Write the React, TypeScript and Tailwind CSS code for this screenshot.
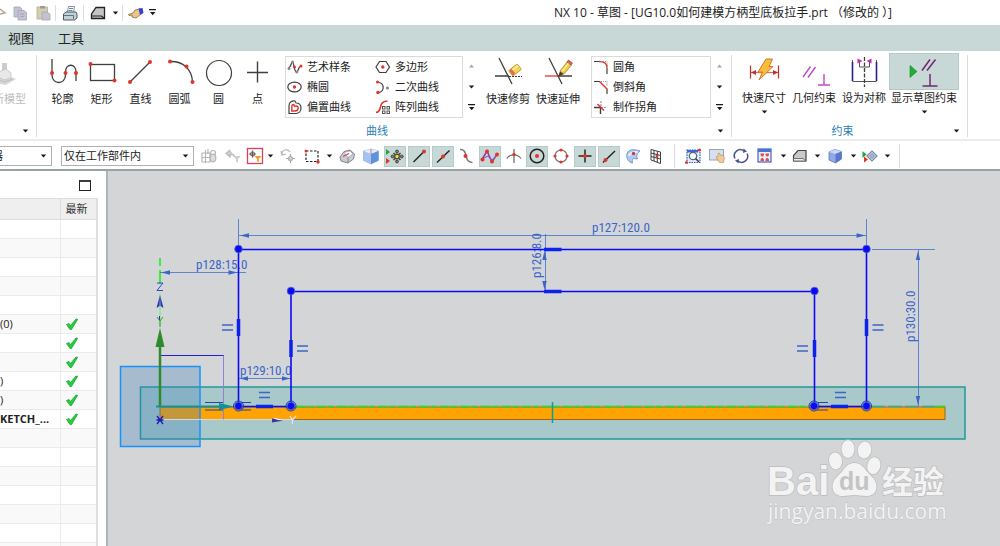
import type { ReactNode } from "react";

const RED = "#e0352b";
const INK = "#3f3f3f";

function Svg({ w, h, box, children }: { w: number; h: number; box?: string; children: ReactNode }) {
  return (
    <svg width={w} height={h} viewBox={box ?? `0 0 ${w} ${h}`} fill="none" stroke={INK} strokeWidth="1.2" className="shrink-0" aria-hidden="true">
      {children}
    </svg>
  );
}

function Dot({ x, y, r = 2 }: { x: number; y: number; r?: number }) {
  return <circle cx={x} cy={y} r={r} fill={RED} stroke="none" />;
}

function Caret({ faint, up, bar }: { faint?: boolean; up?: boolean; bar?: boolean }) {
  return (
    <Svg w={7} h={bar ? 7 : 4}>
      <g fill={faint ? "#a5a5a5" : "#1a1a1a"} stroke="none">
        {bar ? <path d="M0 0h7v1.3H0zM1 3h5.4L3.7 6.2z" /> : up ? <path d="M3.5 0.5 6 3.5H1z" /> : <path d="M.8.4h5.4L3.5 3.6z" />}
      </g>
    </Svg>
  );
}

/* ---------- large ribbon icons (32 x 32) ---------- */

const profileIcon = (
  <Svg w={32} h={32}>
    <path d="M5 2v16c0 10 13.500 10 13.500 0v-3c0-9 10.500-9 10.500 0v9" strokeWidth="1.3" />
    <Dot x={5} y={16} /><Dot x={18.500} y={16} /><Dot x={29} y={16} />
  </Svg>
);
const rectIcon = (
  <Svg w={32} h={32}>
    <rect x="4.500" y="7.500" width="24" height="16" strokeWidth="1.3" />
    <Dot x={4.500} y={7} /><Dot x={28.500} y={23.500} />
  </Svg>
);
const lineIcon = (
  <Svg w={32} h={32}>
    <path d="M5 25 25 5" strokeWidth="1.3" /><Dot x={5} y={25} /><Dot x={25} y={5} />
  </Svg>
);
const arcIcon = (
  <Svg w={32} h={32}>
    <path d="M6 4.500C19 4 28 12 28.500 25" strokeWidth="1.3" /><Dot x={6} y={4.500} /><Dot x={22.500} y={9.500} /><Dot x={28.500} y={25} />
  </Svg>
);
const circleIcon = <Svg w={32} h={32}><circle cx="16" cy="16" r="12.500" /></Svg>;
const pointIcon = <Svg w={32} h={32}><path d="M15.500 4.500v21M5 15.500h21" strokeWidth="1.4" /></Svg>;
const trimIcon = (
  <Svg w={32} h={32}>
    <path d="M7 1l13 26M3 19h14" strokeWidth="1.3" /><path d="M17 19.500h13" strokeDasharray="2 1" />
    <g transform="rotate(-38 23 13)">
      <rect x="17.500" y="9.500" width="11" height="7" rx="1" fill="#f5d456" stroke="#b8922a" strokeWidth=".8" />
      <path d="M18 10h3v6h-3z" fill="#e8694a" stroke="none" /><path d="M21 11.500h7" stroke="#fff3b5" />
    </g>
  </Svg>
);
const extendIcon = (
  <Svg w={32} h={32}>
    <path d="M7 1l13 26M16 19h14" strokeWidth="1.3" /><path d="M3 19h13" stroke={RED} strokeWidth="1.3" />
    <path d="M16 20l2-6 4 3z" fill="#4a4030" stroke="none" />
    <path d="M18 14 25 5l4.500 3L22 17z" fill="#f3cc45" stroke="#a98325" strokeWidth=".8" />
    <path d="M25 5l1.500-2 4 3-1.500 2z" fill="#d96a5a" stroke="#a34436" strokeWidth=".7" />
    <path d="M20 14.500l6.500-8" stroke="#fff0a3" />
  </Svg>
);
const dimensionIcon = (
  <Svg w={32} h={32}>
    <path d="M2.500 9.500v13M30.500 9.500v13" stroke="#c4302b" /><path d="M3 16.500h27" stroke="#e46a62" />
    <path d="M3 16.500l5-2.500v5zM30 16.500l-5-2.500v5z" fill="#c4302b" stroke="none" />
    <path d="M18 3h6.500l-3.500 7.500h4L11 24l3.500-8H10z" fill="#f9bd3c" stroke="#d9752a" strokeWidth="1" />
  </Svg>
);
const constraintIcon = (
  <Svg w={32} h={32}>
    <path d="M5 21l7.500-10.500M10 21.500l7.500-10.500M20 29h13M26 18v11" stroke="#c04bc4" strokeWidth="1.4" />
  </Svg>
);
const symmetricIcon = (
  <Svg w={32} h={32}>
    <path d="M4.500 6v19M28.500 6v19" stroke="#27208c" strokeWidth="1.6" />
    <path d="M4.500 25.500h24M4.500 4v2M28.500 4v2M11.500 5v6h10V5" strokeWidth=".9" />
    <path d="M16.500 1v30" strokeDasharray="4 1.500" strokeWidth="1.300" />
    <path d="M9.500 2.500l5 2.500-5 2.500zM23.500 2.500l-5 2.500 5 2.500z" fill="#c42bb4" stroke="none" />
  </Svg>
);
const showConstraintIcon = (
  <Svg w={36} h={32}>
    <path d="M4 9.500l7 6-7 6z" fill="#1fae35" stroke="#0f8a26" strokeWidth=".6" />
    <path d="M16 14.500 24 3.500M21 14.500l8.500-11M16.500 30h15M24 18v12" stroke="#6e2a70" strokeWidth="1.5" />
  </Svg>
);
const modelIcon = (
  <Svg w={28} h={32}>
    <g stroke="none">
      <path d="M2 5h6v9H2zM12 6h5v14h-5z" fill="#cdcdcd" />
      <path d="M0 19l12-3 14 6-10 6L0 25z" fill="#d9d9d9" />
      <path d="M8 15l8-3 5 4v5l-7 2-6-3z" fill="#e8e8e8" stroke="#bdbdbd" strokeWidth=".7" />
      <path d="M2 20l12 5 9-3" stroke="#bfbfbf" fill="none" />
    </g>
  </Svg>
);

/* ---------- gallery icons (16 x 16) ---------- */

const splineIcon = (
  <Svg w={16} h={16}>
    <path d="M1 9C4 9 4 3 5.500 3S7 13 9.500 13s1-6 5-6" />
    <g fill="#8b8b8b" stroke="none"><circle cx="2" cy="9.500" r="1.500" /><circle cx="5.500" cy="3" r="1.500" /><circle cx="9.800" cy="13" r="1.500" /></g>
    <Dot x={7.500} y={8} r={1.500} /><Dot x={14} y={7} r={1.500} />
  </Svg>
);
const ellipseIcon = <Svg w={16} h={16}><ellipse cx="7.500" cy="8" rx="6.700" ry="4.800" /><Dot x={7.500} y={8} r={1.700} /></Svg>;
const offsetIcon = (
  <Svg w={16} h={16}>
    <path d="M2 14.500V7C2 3 5 1.500 8 2l1 2c3 0 5 2 5 5s-2 5.500-5 5.500z" />
    <path d="M4.800 12V8c0-2 1-3 2-2.500L7.500 7.500C10 6 11.500 8 11.200 9.500S10 12 8.500 12z" stroke={RED} strokeWidth="1.400" />
  </Svg>
);
const polygonIcon = <Svg w={16} h={16}><path d="M4.500 2.500h6.500L14.500 8 11 13.500H4.500L1 8z" /><Dot x={7.800} y={8} r={1.700} /></Svg>;
const conicIcon = (
  <Svg w={16} h={16}>
    <path d="M2.500 3c7 1 8 9 .5 11" /><Dot x={2.500} y={3} r={1.500} /><Dot x={3} y={13.500} r={1.800} /><circle cx="12.500" cy="9" r="1.600" fill="#8a8a8a" stroke="none" />
  </Svg>
);
const patternIcon = (
  <Svg w={16} h={16}>
    <path d="M1 13.500c7 0 1-11 11.500-11.500" stroke={RED} strokeWidth="1.600" />
    <g strokeWidth="1" stroke="#555"><rect x="7.500" y="7.500" width="2.500" height="2.500" /><rect x="12" y="7.500" width="2.500" height="2.500" /><rect x="7.500" y="12" width="2.500" height="2.500" /><rect x="12" y="12" width="2.500" height="2.500" /></g>
  </Svg>
);
const filletIcon = (
  <Svg w={16} h={16}>
    <path d="M1 2.500h5M14 8.500V15" /><path d="M6 2.500c5 0 8 2 8 6" stroke={RED} strokeWidth="1.400" /><path d="M8 2.500h6V7" stroke="#999" strokeDasharray="1 1" />
  </Svg>
);
const chamferIcon = (
  <Svg w={16} h={16}>
    <path d="M1 2.500h6M14 9.500V15" /><path d="M6.500 2.500 14 10" stroke={RED} strokeWidth="1.400" /><path d="M8 2.500h6V7" stroke="#999" strokeDasharray="1 1" />
  </Svg>
);
const cornerIcon = (
  <Svg w={16} h={16}>
    <path d="M1 8.500h6.500V15" strokeWidth="1.400" /><path d="M8 2v5M8 8.500h6" stroke="#999" strokeDasharray="2 1" /><path d="M4.500 5l6.500 6.500" stroke={RED} strokeWidth="1.500" />
  </Svg>
);

/* ---------- selection bar icons (18 x 18) ---------- */

const ghostPartIcon = (
  <Svg w={18} h={18}>
    <g stroke="#b5b5b5"><path d="M2 6h8v9H2zM5.500 3v13M2 10.500h8M8 2v5" /><circle cx="13" cy="6" r="2.500" /><ellipse cx="13" cy="11" rx="2.800" ry="3.800" fill="#ddd" /></g>
  </Svg>
);
const ghostFilterIcon = (
  <Svg w={18} h={18}>
    <path d="M6 3 2 6.500 6 10V7.500c3 0 4 0 5 2" stroke="#b8b8b8" fill="#ccc" /><path d="M9 9h8l-3 3v4l-2-1.500V12z" fill="#cfcfcf" stroke="none" />
  </Svg>
);
const filterIcon = (
  <Svg w={18} h={18}>
    <rect x="1.500" y="1.500" width="15" height="15" fill="#fff" stroke="#d9405a" strokeWidth="1.300" />
    <circle cx="6.500" cy="7" r="2" stroke="#777" /><path d="M6.500 3.500v7M3 7h7" stroke="#7a5050" />
    <path d="M8.500 9h7l-2.700 3v3.500l-1.800-1.500V12z" fill="#f0a12b" stroke="none" />
  </Svg>
);
const ghostMoveIcon = (
  <Svg w={18} h={18}>
    <path d="M3 7c0-5 6-5 8-2M2 4l1 4 4-1" stroke="#b5b5b5" /><path d="M11.500 7v9M7 11.500h9" stroke="#a8a8a8" /><circle cx="11.500" cy="11.500" r="2" fill="#d2d2d2" stroke="#b0b0b0" />
  </Svg>
);
const lassoIcon = <Svg w={18} h={18}><rect x="3" y="4" width="12" height="10.500" strokeDasharray="2.500 1.500" stroke="#222" /><Dot x={3} y={4} r={1.500} /><Dot x={15} y={15} r={1.700} /></Svg>;
const solidIcon = (
  <Svg w={18} h={18}>
    <path d="M2 10 6 4.500 12 3l4.500 4-1 5-5.500 4-7-2z" fill="#c9ccd4" stroke="#686d78" strokeWidth=".8" />
    <path d="M6 5.500 12 4l3 3-5 3.500z" fill="#fff" stroke="#8b8f99" strokeWidth=".6" /><path d="M5 9.500l6-3" stroke="#d8463c" /><path d="M10 10.500V16" stroke="#8b8f99" />
  </Svg>
);
const cubeBlueIcon = (
  <Svg w={18} h={18}>
    <path d="M1.500 4 9 2l7.500 2v9.500L9 17l-7.500-3.500z" fill="#a3c2f0" stroke="#93aedb" strokeWidth=".7" />
    <path d="M1.500 4 9 2l7.500 2L9 7z" fill="#e6ecfb" stroke="none" /><path d="M9 7l7.500-3v9.500L9 17z" fill="#5c92de" stroke="none" /><path d="M9 2v5" stroke="#e58079" />
  </Svg>
);
const snapIcon = (
  <Svg w={20} h={18}>
    <path d="M1 2l4 3-4 3z" fill="#1fa83a" stroke="none" /><path d="M1 11l4 3-4 3z" fill={RED} stroke="none" />
    <circle cx="12" cy="9.500" r="2.300" fill="#f3dc35" stroke="#444" /><g fill="#888" stroke="#333" strokeWidth=".9"><circle cx="12" cy="4.500" r="1.400" /><circle cx="12" cy="14.500" r="1.400" /><circle cx="7.500" cy="9.500" r="1.400" /><circle cx="16.800" cy="9.500" r="1.400" /></g>
    <path d="M8.500 6l1.500 1.500M15.500 6 14 7.500M8.500 13l1.500-1.500M15.500 13 14 11.500" strokeWidth="1.500" />
  </Svg>
);
const endIcon = <Svg w={18} h={18}><path d="M3.500 15 13.500 5" stroke="#222" strokeWidth="1.400" /><Dot x={14} y={4.500} /></Svg>;
const midIcon = <Svg w={18} h={18}><path d="M3 15.500 15.500 3.500" stroke="#222" strokeWidth="1.400" /><Dot x={9} y={9.500} /></Svg>;
const controlIcon = <Svg w={18} h={18}><path d="M2 2.500c9-.5 3 13 12.500 13" stroke="#777" strokeWidth="1.500" /><Dot x={7.500} y={9} /></Svg>;
const poleIcon = (
  <Svg w={20} h={18}>
    <path d="M2 12.500 7 4l5 11 5.500-8.500" stroke="#8b35b0" strokeWidth="1.500" /><path d="M2 12.500C5 11 7 8 9 10s3 6 8-3" stroke="#9a60b5" />
    <Dot x={2.500} y={12.500} /><Dot x={7} y={4.500} /><Dot x={12} y={14.500} /><Dot x={17} y={7.500} />
  </Svg>
);
const intersectIcon = <Svg w={18} h={18}><path d="M2 11.500c3-5 10-5 14 0M9 2v14" stroke="#666" /><Dot x={9} y={7.500} r={1.700} /></Svg>;
const centerIcon = <Svg w={18} h={18}><circle cx="9" cy="9" r="6.800" stroke="#222" strokeWidth="1.500" /><Dot x={9} y={9} /></Svg>;
const quadrantIcon = <Svg w={18} h={18}><circle cx="9" cy="9" r="6" stroke="#777" /><Dot x={9} y={3} r={1.600} /><Dot x={9} y={15} r={1.600} /><Dot x={3} y={9} r={1.600} /><Dot x={15} y={9} r={1.600} /></Svg>;
const existingIcon = <Svg w={18} h={18}><path d="M9 2.500v13M2.500 9h13" stroke="#222" strokeWidth="1.500" /><Dot x={9} y={9} /></Svg>;
const onCurveIcon = <Svg w={18} h={18}><path d="M3 15.500 15 4" stroke="#222" strokeWidth="1.400" /><Dot x={5.500} y={13} /></Svg>;
const faceIcon = (
  <Svg w={18} h={18}>
    <path d="M3 6.500C5 2 9 2 16 4c-3 2-4 5-2.500 8l-4-.5c-1.500 1-1.500 3-1 4.500C4 15 2 11 3 6.500z" fill="#aecbf2" stroke="#6a8fc9" strokeWidth=".9" /><path d="M4.500 9C6 6 9 5 13.500 5" stroke="#e8f1fd" strokeWidth="1.800" /><Dot x={9.500} y={6.500} r={1.700} />
  </Svg>
);
const gridIcon = (
  <Svg w={18} h={18}>
    <path d="M4 2.500 13.500 5v11.500L4 13zM7 3.300V14M10.300 4.200v11.200M4 6l9.500 2.500M4 9.500 13.500 12" strokeWidth="1" /><Dot x={10} y={9} r={1.500} />
  </Svg>
);
const zoomWindowIcon = (
  <Svg w={18} h={18}>
    <rect x="3" y="3" width="13" height="12.500" fill="#e6edfa" stroke="#2e55c8" strokeDasharray="1.500 1" /><path d="M3 3h11v2.500H3z" fill="#3f68cf" stroke="none" />
    <circle cx="9" cy="9" r="3.700" fill="#f4f7fc" stroke="#566" /><path d="M11.500 11.500l3.500 3.500" strokeWidth="1.600" /><Dot x={2.500} y={15.500} r={1.500} /><Dot x={15.500} y={3} r={1.600} />
  </Svg>
);
const panIcon = (
  <Svg w={18} h={18}>
    <rect x="1.500" y="2.500" width="14" height="10.500" fill="#d7e0ef" stroke="#8e9cb5" strokeWidth=".9" /><path d="M8 10l2-.5V6.500l1.500-.5 1 2.500 2.500-.5 1.500 3-1 4.500h-4z" fill="#eecb98" stroke="#b8884c" strokeWidth=".6" />
  </Svg>
);
const rotateIcon = (
  <Svg w={18} h={18}>
    <path d="M3 11.500A6 6 0 0 1 12 4M15 6.500a6 6 0 0 1-9 7.500" stroke="#46558a" strokeWidth="1.500" /><path d="M11.500 1.500l3.500 3-4 1.500zM6.500 16.500 3 13.500 7 12z" fill="#46558a" stroke="none" />
  </Svg>
);
const fitIcon = (
  <Svg w={18} h={18}>
    <rect x="2" y="2" width="13" height="13" fill="#e9effb" stroke="#3f63c4" /><path d="M2 2h13v3H2z" fill="#4a72d8" stroke="none" />
    <g fill={RED} stroke="none"><path d="M4.500 6.500H8V8L7 9.500H5.500L4.500 8zM9.500 6.500H13V8l-1 1.500h-1.500L9.500 8zM4.500 14H8v-1.500L7 11H5.500l-1 1.500zM9.500 14H13v-1.500L12 11h-1.500l-1 1.500z" opacity=".85" /></g>
  </Svg>
);
const sectionIcon = (
  <Svg w={18} h={18}>
    <path d="M2.500 14V8.500L7 3.500h8V14z" fill="#c9c9c9" stroke="#444" /><path d="M2.500 11.500H12l3 2.500H2.500z" fill="#eee" stroke="#555" strokeWidth=".8" />
  </Svg>
);
const shadedIcon = (
  <Svg w={18} h={18}>
    <path d="M3 5 9 2.500 15.500 4.500V12L9.500 16 3 13z" fill="#8fa9e6" stroke="#6077b0" strokeWidth=".8" /><path d="M3 5 9 2.500l6.500 2L9.500 7z" fill="#c9d8f8" stroke="none" /><path d="M9.500 7l6-2.500V12l-6 4z" fill="#5a78c8" stroke="none" />
  </Svg>
);
const orientIcon = (
  <Svg w={18} h={18}>
    <path d="M1.500 4l4 3.500-4 3.500z" fill="#1ea83a" stroke="none" /><path d="M3 9.500l4 3-4 3z" fill={RED} stroke="none" />
    <path d="M6 9l5-5 5 5-5 5z" fill="#dfe6f5" stroke="#7b8596" /><path d="M8.500 9 11 6.500 13.500 9 11 11.500z" fill="#a9bbe6" stroke="#5f72a8" strokeWidth=".8" />
  </Svg>
);

/* ---------- building blocks ---------- */

function Tool({ label, icon, width, disabled, menu, active }: { label: string; icon: ReactNode; width: string; disabled?: boolean; menu?: boolean; active?: boolean }) {
  return (
    <button type="button" disabled={disabled} className={`flex shrink-0 flex-col items-center ${width}`}>
      <span className={`flex h-[37px] items-center justify-center border ${active ? "w-full border-[#b4cbc8] bg-[#c8d8d6]" : "border-transparent"}`}>{icon}</span>
      <span className={`whitespace-nowrap text-[11px] leading-4 ${disabled ? "text-[#bdbdbd]" : ""}`}>{label}</span>
      {menu && <span className="mt-1 flex"><Caret /></span>}
    </button>
  );
}

function GalleryArrows() {
  return (
    <div className="mt-0.5 flex h-[62px] w-4 flex-col items-center">
      <button type="button" aria-label="上一行" className="flex flex-1 items-center"><Caret faint up /></button>
      <button type="button" aria-label="下一行" className="flex flex-1 items-center"><Caret /></button>
      <button type="button" aria-label="更多" className="flex flex-1 items-center"><Caret bar /></button>
    </div>
  );
}

function GalleryItem({ label, icon }: { label: string; icon: ReactNode }) {
  return (
    <button type="button" className="flex h-5 w-[88px] items-center gap-1 pl-px whitespace-nowrap text-[11px] leading-4">
      {icon}
      {label}
    </button>
  );
}

function Divider() {
  return <div className="w-px self-stretch bg-[#dcdcdc]" />;
}

type BarItem = { kind: "icon" | "on" | "menu" | "sep"; width: string; label?: string; icon?: ReactNode };

const barItems: BarItem[] = [
  { kind: "icon", width: "w-6", label: "装配导航", icon: ghostPartIcon },
  { kind: "icon", width: "w-6", label: "重置过滤器", icon: ghostFilterIcon },
  { kind: "icon", width: "w-[19px]", label: "过滤器", icon: filterIcon },
  { kind: "menu", width: "w-3", label: "过滤器选项" },
  { kind: "icon", width: "w-6", label: "移动", icon: ghostMoveIcon },
  { kind: "icon", width: "w-[23px]", label: "框选", icon: lassoIcon },
  { kind: "menu", width: "w-3", label: "框选选项" },
  { kind: "icon", width: "w-6", label: "实体", icon: solidIcon },
  { kind: "icon", width: "w-6", label: "面", icon: cubeBlueIcon },
  { kind: "on", width: "w-6", label: "启用捕捉点", icon: snapIcon },
  { kind: "on", width: "w-6", label: "端点", icon: endIcon },
  { kind: "on", width: "w-6", label: "中点", icon: midIcon },
  { kind: "icon", width: "w-[23px]", label: "控制点", icon: controlIcon },
  { kind: "on", width: "w-6", label: "极点", icon: poleIcon },
  { kind: "icon", width: "w-[23px]", label: "交点", icon: intersectIcon },
  { kind: "on", width: "w-6", label: "圆心", icon: centerIcon },
  { kind: "icon", width: "w-6", label: "象限点", icon: quadrantIcon },
  { kind: "on", width: "w-6", label: "现有点", icon: existingIcon },
  { kind: "on", width: "w-6", label: "曲线上的点", icon: onCurveIcon },
  { kind: "icon", width: "w-[23px]", label: "面上的点", icon: faceIcon },
  { kind: "icon", width: "w-[23px]", label: "有界栅格", icon: gridIcon },
  { kind: "sep", width: "w-[14px]" },
  { kind: "icon", width: "w-6", label: "缩放", icon: zoomWindowIcon },
  { kind: "icon", width: "w-6", label: "平移", icon: panIcon },
  { kind: "icon", width: "w-6", label: "旋转", icon: rotateIcon },
  { kind: "icon", width: "w-6", label: "适合窗口", icon: fitIcon },
  { kind: "menu", width: "w-3", label: "窗口选项" },
  { kind: "icon", width: "w-[22px]", label: "剖切", icon: sectionIcon },
  { kind: "menu", width: "w-3", label: "剖切选项" },
  { kind: "icon", width: "w-6", label: "着色", icon: shadedIcon },
  { kind: "menu", width: "w-3", label: "着色选项" },
  { kind: "icon", width: "w-[22px]", label: "定向", icon: orientIcon },
  { kind: "menu", width: "w-3", label: "定向选项" },
  { kind: "sep", width: "w-[13px]" },
];

function BarButton({ item }: { item: BarItem }) {
  if (item.kind === "sep") {
    return <span className={`flex h-6 shrink-0 justify-center ${item.width}`}><Divider /></span>;
  }
  const on = item.kind === "on";
  return (
    <button type="button" aria-label={item.label} aria-pressed={on ? true : undefined} className={`flex shrink-0 items-center justify-center ${item.width}`}>
      <span className={`flex h-[21px] items-center justify-center ${on ? "w-[22px] border border-[#b4cbc8] bg-[#c8d8d6]" : ""}`}>
        {item.kind === "menu" ? <Caret /> : item.icon}
      </span>
    </button>
  );
}

type Row = { name?: string; bold?: boolean; current?: boolean };
const rows: Row[] = [
  {}, {}, {}, {}, {},
  { name: "(0)", current: true },
  { current: true },
  { current: true },
  { name: ")", current: true },
  { name: ")", current: true },
  { name: "KETCH_...", bold: true, current: true },
  {}, {}, {}, {}, {}, {}, {},
];

function Navigator() {
  return (
    <aside className="flex w-[108px] shrink-0 flex-col overflow-hidden border-r-2 border-[#aeb6b9] bg-white pr-2">
      <div className="flex h-[27px] shrink-0 items-center justify-end pt-0.5 pr-[7px]">
        <button type="button" aria-label="最大化">
          <Svg w={12} h={11}><rect x=".5" y="1" width="11" height="9.500" stroke="#222" strokeWidth="1" /><path d="M0 1h12" stroke="#222" strokeWidth="1.500" /></Svg>
        </button>
      </div>
      <div className="border-t border-r-2 border-[#dedede]">
        <table className="w-full table-fixed border-collapse text-[11px] leading-4">
          <thead>
            <tr className="h-5 bg-[#efefef]">
              <th className="w-[60px] border-r border-b border-[#dcdcdc]" />
              <th className="border-b border-[#dcdcdc] p-0 pl-[5px] text-left font-normal text-[#333]">最新</th>
            </tr>
          </thead>
          <tbody>
            {rows.map((row, i) => (
              <tr key={i} className={`h-[19px] border-b border-[#ebebeb] ${i % 2 ? "bg-[#f9f9f9]" : "bg-white"}`}>
                <td className={`overflow-hidden border-r border-[#ebebeb] p-0 whitespace-nowrap ${row.bold ? "font-bold" : ""}`}>{row.name}</td>
                <td className="p-0 pl-[5px]">
                  {row.current && (
                    <Svg w={12} h={12}><path d="M.5 6.500 3 5.500l1.500 2L10 1l1.700.3L5.500 11.500H4z" fill="#22cf3e" stroke="#159a2c" strokeWidth=".7" /></Svg>
                  )}
                </td>
              </tr>
            ))}
          </tbody>
        </table>
      </div>
    </aside>
  );
}

const BLUE = "#0a0af5";
const DIM = "#3b66c8";
const dimFont = "font-['Liberation_Sans_Narrow','Roboto_Condensed','Liberation_Sans',sans-serif]";

function Equals({ x, y, w = 11 }: { x: number; y: number; w?: number }) {
  return <path d={`M${x} ${y}h${w}M${x} ${y + 5}h${w}`} stroke={DIM} strokeWidth="1.400" />;
}

function Vertex({ x, y, ring }: { x: number; y: number; ring?: boolean }) {
  return (
    <g>
      {ring && <circle cx={x} cy={y} r="5" stroke="#1d3fae" strokeWidth="1" />}
      <circle cx={x} cy={y} r="3.800" fill={BLUE} stroke="#4a62c8" strokeWidth=".8" />
    </g>
  );
}

function Sketch() {
  return (
    <svg width="892" height="375" viewBox="108 171 892 375" fill="none" role="img" aria-label="草图" className="block">
      {/* datum plane and plate */}
      <rect x="140.500" y="387" width="824.500" height="52" fill="#a8c8ca" stroke="#1f9a9c" strokeWidth="1.500" />
      <rect x="160" y="407" width="785" height="12.500" fill="#ffa303" stroke="#97691c" strokeWidth="1" />
      <rect x="120.500" y="366.500" width="79.500" height="80" fill="#3c80b8" fillOpacity=".3" stroke="#1593fb" strokeWidth="1.500" />
      <path d="M160 419.500h133" stroke="#d8d8d8" strokeWidth="1.200" />
      <path d="M296 406.500h649" stroke="#d9807a" strokeWidth="1.300" />
      <path d="M296 406.500h518" stroke="#08ef2a" strokeWidth="1.500" strokeDasharray="10 1.500 6 3" />
      <path d="M871 406.500h64" stroke="#19b8a0" strokeWidth="1.500" strokeDasharray="14 3" />
      <path d="M935 406.500h10" stroke="#08ef2a" strokeWidth="1.500" />
      <path d="M552.500 402v21" stroke="#0e98a0" strokeWidth="1.500" />

      {/* coordinate axes */}
      <path d="M160.500 355.500h63.500" stroke="#2020e0" />
      <path d="M223.500 355.500v64" stroke="#8f80e0" />
      <path d="M160 258v8M160 270v14" stroke="#38f038" strokeWidth="2" />
      <path d="M160 294v33" stroke="#9be3a5" strokeWidth="2" />
      <path d="M157 283h6l-6 7.500h6" stroke="#3446c8" />
      <path d="M160 295l-3.500 13 3-2zM160 295l3.500 13-3-2z" fill="#2832b8" />
      <path d="M159.500 316v4" stroke="#2832b8" /><path d="M157 317l3 4 3-4M160 321v6" stroke="#3c943c" />
      <path d="M160 407V345" stroke="#2d8b2d" strokeWidth="2.500" />
      <path d="M160 328l4.500 19h-9z" fill="#2d8b2d" />
      <path d="M156 406.500h65" stroke="#119393" strokeWidth="2" />
      <path d="M219 403l15 3.500-15 3.500z" fill="#119393" />
      <path d="M205 402.500h18M205 410h18M241 402.500h10M241 410h10" stroke="#1b4ca8" strokeWidth="1.200" />
      <path d="M157 416l6 8M163 416l-6 8M156.500 420h7" stroke="#1919c0" strokeWidth="1.300" />
      <path d="M272 422.500v-4l12 2z" fill="#3737a5" /><path d="M273 418h2l10 2.500-7-.5z" fill="#fff" />
      <path d="M290 416l2.500 4 3.500-4M292.500 420v4" stroke="#e4e4fa" strokeWidth="1.300" />

      {/* dimensions */}
      <g stroke={DIM} strokeWidth="1" strokeOpacity=".75">
        <path d="M238.500 219v26M866.500 219v26M239 235.500h627M160 272.500h86M239 378.500h52M545.500 234v57M872 249.500h63M918.500 250v156" />
      </g>
      <g fill={DIM}>
        <path d="M240 235.500l9-2.200v4.400zM865.500 235.500l-9-2.200v4.400zM161 272.500l9-2.200v4.400zM237.500 272.500l-9-2.200v4.400zM240 378.500l8-2.200v4.400zM290 378.500l-8-2.200v4.400zM544.500 251l-2.200 9h4.400zM544.500 290l-2.200-9h4.400zM918 251l-2.200 9h4.400zM918 405l-2.200-9h4.400z" />
      </g>
      <g fill={DIM} className={`${dimFont} text-[13px]`}>
        <text x="592" y="232">p127:120.0</text>
        <text x="196" y="269">p128:15.0</text>
        <text x="240" y="375">p129:10.0</text>
        <text transform="translate(541 278) rotate(-90)">p126:8.0</text>
        <text transform="translate(915 342) rotate(-90)">p130:30.0</text>
      </g>

      {/* handle profile */}
      <path d="M238.500 406.500V249.500H866.500V406.500H814.500V291.500H291V406.500z" stroke={BLUE} strokeWidth="1.600" />
      <path d="M238.500 319v17M291 340v17M814.500 340v17M866.500 319v17M544 249.500h17.500M544 291.500h17.500M256 406.500h17M831 406.500h17" stroke="#0b22ea" strokeWidth="3.500" />
      <Vertex x={238.500} y={249} /><Vertex x={866.500} y={249} /><Vertex x={291} y={291} /><Vertex x={814.500} y={291} />
      <Vertex x={238.500} y={406} ring /><Vertex x={291} y={406} ring /><Vertex x={814} y={406} ring /><Vertex x={866.500} y={406} ring />
      <Equals x={222} y={325} /><Equals x={297} y={346} /><Equals x={259} y={392.500} />
      <Equals x={797} y={346} /><Equals x={872.500} y={325} /><Equals x={835} y={392.500} />
      <path d="M817 402.500h11M817 410h11" stroke="#1b4ca8" strokeWidth="1.200" />

      {/* watermark */}
      <g fill="#f3f3f3" stroke="#bcbdbe" strokeWidth="1.500" className="[paint-order:stroke]">
        <ellipse cx="835.500" cy="461" rx="6.500" ry="8.500" transform="rotate(-8 835 461)" />
        <ellipse cx="848" cy="449" rx="6.500" ry="9" />
        <ellipse cx="864.500" cy="450" rx="6.800" ry="8.500" transform="rotate(10 864 450)" />
        <ellipse cx="874" cy="465.500" rx="6.500" ry="8.500" transform="rotate(14 873 465)" />
        <path d="M854.500 463c6 0 9 4 12 8 3 4 10 8 10 15.500 0 7-5 9.500-10 9.500s-8-1-12-1-7 1-12 1-10-2.500-10-9.500c0-7.500 7-11.500 10-15.500 3-4 6-8 12-8z" />
        <text x="767" y="495" className="font-['Liberation_Sans',sans-serif] text-[40px] font-bold">Bai</text>
        <text x="882" y="493" className="font-['Noto_Sans_CJK_SC',sans-serif] text-[31px] font-bold">经验</text>
        <text x="768" y="519" strokeWidth=".8" className="font-['Open_Sans','Noto_Sans',sans-serif] text-[21px] font-medium">jingyan.baidu.com</text>
      </g>
      <text x="839" y="490" fill="#c3c4c5" className="font-['Liberation_Sans',sans-serif] text-[25px] font-bold">du</text>
    </svg>
  );
}

export default function App() {
  return (
    <div className="flex h-screen flex-col overflow-hidden bg-white font-['Open_Sans','Noto_Sans_CJK_SC',sans-serif] text-[#222]">
      {/* title bar */}
      <header className="flex h-[25px] shrink-0 items-center">
        <nav aria-label="快速访问" className="flex w-[446px] shrink-0 items-center">
          <button type="button" aria-label="剪切" className="w-[9px]"><Svg w={6} h={18}><path d="M0 5l5 4-5 1" stroke="#b5aa90" strokeWidth="1.500" /></Svg></button>
          <button type="button" aria-label="复制" className="flex w-[22px] justify-center">
            <Svg w={16} h={18}><g fill="#c2c2d2" stroke="#a6a6b8" strokeWidth=".8"><path d="M2 3h6l2 2v8H2z" /><path d="M6 6.500h6l2.500 2V16H6z" /></g><path d="M8 10h4M8 12.500h4" stroke="#9d9db0" strokeWidth=".8" /></Svg>
          </button>
          <button type="button" aria-label="粘贴" className="flex w-[23px] justify-center">
            <Svg w={16} h={18}><rect x="2" y="3" width="10.500" height="12" fill="#d3cdb2" stroke="#b5ae92" strokeWidth=".8" /><path d="M5 2h5v2.500H5z" fill="#999" stroke="none" /><path d="M7 8h5l3 2v6H7z" fill="#c2c2d2" stroke="#a6a6b8" strokeWidth=".8" /></Svg>
          </button>
          <span className="ml-px flex h-4"><Divider /></span>
          <button type="button" aria-label="打印" className="flex w-[27px] justify-center">
            <Svg w={16} h={18}><path d="M5 9l1.500-6.500h6L11.500 9z" fill="#fff" stroke="#5d7f95" strokeWidth=".8" /><path d="M1.500 10 4 8h10l1 2v4l-2.500 2h-11z" fill="#c3d0d6" stroke="#3a4a52" strokeWidth=".9" /><path d="M2 11.500h9.500V15M7 4.500h4M6.500 6.500h4" stroke="#41606f" strokeWidth=".8" /></Svg>
          </button>
          <span className="flex h-4"><Divider /></span>
          <button type="button" aria-label="显示" className="flex w-[27px] justify-center">
            <Svg w={16} h={14}><path d="M1.500 12.500V8L6 1.500h8.500v11z" fill="#c4c4c4" stroke="#222" strokeWidth="1.300" /><path d="M1.500 10h10l3 2.500" stroke="#222" /></Svg>
          </button>
          <button type="button" aria-label="显示选项" className="flex w-[8px] justify-center"><Caret /></button>
          <span className="ml-[3px] flex h-4"><Divider /></span>
          <button type="button" aria-label="触摸模式" className="flex w-[26px] justify-center">
            <Svg w={16} h={14}><path d="M.5 8.500 5 7l2-3 5-1 1 5-5 4-4-1v-2l-3 .5z" fill="#ecc58c" stroke="#8f6a3a" strokeWidth=".8" /><path d="M10.500 2.500l4-.5 1 5-3.500 2z" fill="#3740cf" stroke="none" /></Svg>
          </button>
          <button type="button" aria-label="自定义" className="flex"><Caret bar /></button>
        </nav>
        <h1 className="flex-1 whitespace-nowrap text-center text-[12px] leading-4">NX 10 - 草图 - [UG10.0如何建模方柄型底板拉手.prt （修改的 ）]</h1>
      </header>

      {/* tabs */}
      <nav aria-label="选项卡" className="flex h-[26px] shrink-0 items-center gap-6 bg-[#c8d8d6] pl-2 text-[13px] leading-5">
        <a href="#view">视图</a>
        <a href="#tools">工具</a>
      </nav>

      {/* ribbon */}
      <div className="flex h-[90px] shrink-0 border-b-2 border-[#ececec] pt-1 pb-0.5">
        <section className="flex w-9 shrink-0 flex-col justify-between overflow-hidden">
          <div className="-mt-px flex justify-end pr-[9px]">
            <Tool label="更新模型" icon={modelIcon} width="w-[46px]" disabled />
          </div>
          <div className="flex h-3 items-center justify-end pr-[7px]"><Caret /></div>
        </section>
        <Divider />
        <section className="flex w-[694px] shrink-0 flex-col justify-between">
          <div className="-mt-px flex pl-1.5">
            <Tool label="轮廓" icon={profileIcon} width="w-[39px]" />
            <Tool label="矩形" icon={rectIcon} width="w-[39px]" />
            <Tool label="直线" icon={lineIcon} width="w-[39px]" />
            <Tool label="圆弧" icon={arcIcon} width="w-[39px]" />
            <Tool label="圆" icon={circleIcon} width="w-[39px]" />
            <Tool label="点" icon={pointIcon} width="w-[39px]" />
            <div className="mt-0.5 ml-2 grid h-[62px] grid-cols-[88px_88px] border border-[#dadada]">
              <GalleryItem label="艺术样条" icon={splineIcon} />
              <GalleryItem label="多边形" icon={polygonIcon} />
              <GalleryItem label="椭圆" icon={ellipseIcon} />
              <GalleryItem label="二次曲线" icon={conicIcon} />
              <GalleryItem label="偏置曲线" icon={offsetIcon} />
              <GalleryItem label="阵列曲线" icon={patternIcon} />
            </div>
            <GalleryArrows />
            <div className="ml-1 flex">
              <Tool label="快速修剪" icon={trimIcon} width="w-[50px]" />
              <Tool label="快速延伸" icon={extendIcon} width="w-[50px]" />
            </div>
            <div className="mt-0.5 ml-2 flex h-[62px] w-[120px] flex-col border border-[#dadada]">
              <GalleryItem label="圆角" icon={filletIcon} />
              <GalleryItem label="倒斜角" icon={chamferIcon} />
              <GalleryItem label="制作拐角" icon={cornerIcon} />
            </div>
            <GalleryArrows />
          </div>
          <div className="flex h-3 items-center pr-[7px] text-[11px] leading-3 text-[#2a80b4]">
            <span className="flex-1 text-center">曲线</span><Caret />
          </div>
        </section>
        <Divider />
        <section className="flex w-[235px] shrink-0 flex-col justify-between">
          <div className="-mt-0.5 flex pl-[7px]">
            <Tool label="快速尺寸" icon={dimensionIcon} width="w-[50px]" menu />
            <Tool label="几何约束" icon={constraintIcon} width="w-[50px]" />
            <Tool label="设为对称" icon={symmetricIcon} width="w-[50px]" />
            <Tool label="显示草图约束" icon={showConstraintIcon} width="w-[70px]" menu active />
          </div>
          <div className="flex h-3 items-center pr-[7px] text-[11px] leading-3 text-[#2a80b4]">
            <span className="flex-1 text-center">约束</span><Caret />
          </div>
        </section>
        <Divider />
      </div>

      {/* selection bar */}
      <div className="flex h-[30px] shrink-0 items-center border-b-2 border-[#98a3a5] pt-0.5">
        <div className="relative flex w-[52px] shrink-0 justify-end overflow-hidden">
          <select aria-label="选择过滤器" className="h-5 w-[131px] shrink-0 appearance-none border border-[#b0b0b0] bg-white pl-1 text-[11px] leading-4">
            <option>没有选择过滤器</option>
          </select>
          <span className="pointer-events-none absolute inset-y-0 right-[5px] flex items-center"><Caret /></span>
        </div>
        <div className="relative mr-[3px] ml-[9px] w-[133px] shrink-0">
          <select aria-label="选择范围" className="block h-5 w-full appearance-none border border-[#b0b0b0] bg-white pl-0.5 text-[11px] leading-4">
            <option>仅在工作部件内</option>
          </select>
          <span className="pointer-events-none absolute inset-y-0 right-[5px] flex items-center"><Caret /></span>
        </div>
        {barItems.map((item, i) => <BarButton key={i} item={item} />)}
      </div>

      <div className="flex min-h-0 flex-1">
        <Navigator />
        <main className="min-w-0 flex-1 overflow-hidden bg-[#d4d5d7]">
          <Sketch />
        </main>
      </div>
    </div>
  );
}
